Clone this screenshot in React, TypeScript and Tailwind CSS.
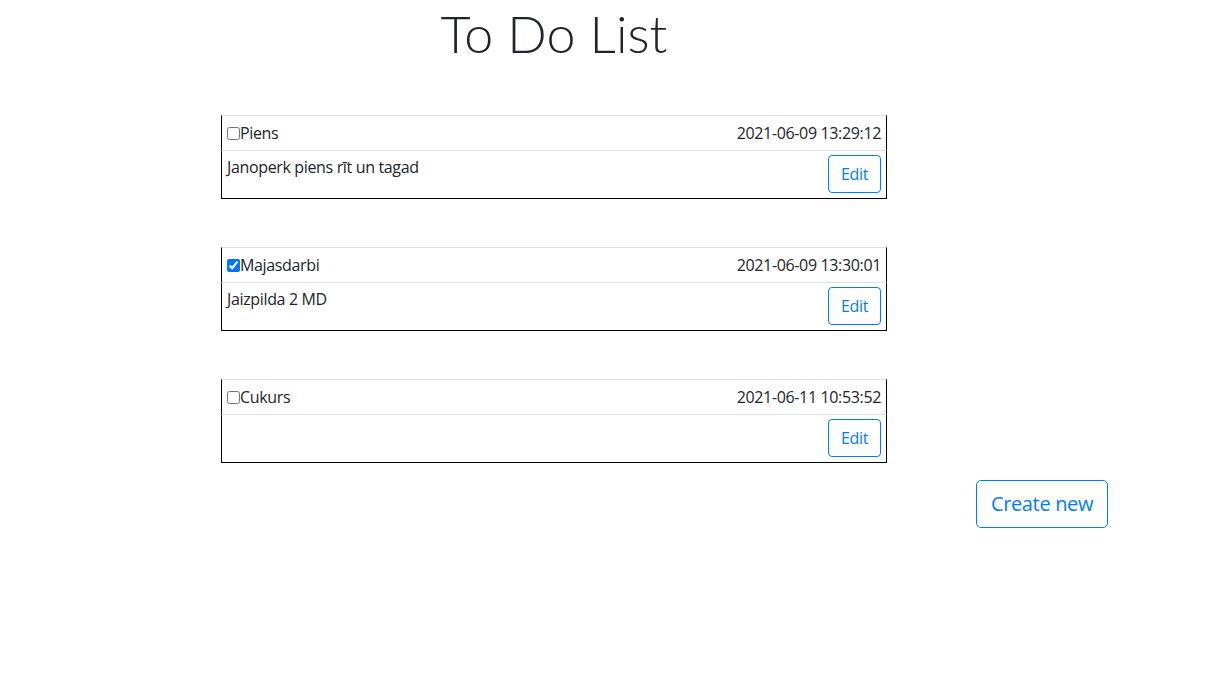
import React from "react";

type Item = { title: string; date: string; desc: string; done: boolean };

const items: Item[] = [
  { title: "Piens", date: "2021-06-09 13:29:12", desc: "Janoperk piens rīt un tagad", done: false },
  { title: "Majasdarbi", date: "2021-06-09 13:30:01", desc: "Jaizpilda 2 MD", done: true },
  { title: "Cukurs", date: "2021-06-11 10:53:52", desc: "", done: false },
];

function Card({ item }: { item: Item }) {
  return (
    <div className="mt-12 w-[666px]">
      <div className="flex items-center justify-between border-t border-t-[#dee2e6] border-x border-x-black px-[5px] h-[35px]">
        <label className="flex items-center">
          <input type="checkbox" defaultChecked={item.done} className="m-0 w-[13px] h-[13px]" />
          <span>{item.title}</span>
        </label>
        <span>{item.date}</span>
      </div>
      <div className="flex items-start justify-between border-t border-t-[#dee2e6] border-x border-x-black border-b border-b-black px-[5px] pt-[4px] pb-[5px]">
        <span className="leading-6">{item.desc}</span>
        <button className="h-[38px] w-[53px] rounded-[4px] border border-[#007bff] text-[#007bff] bg-white text-base leading-6">
          Edit
        </button>
      </div>
    </div>
  );
}

export default function App() {
  return (
    <div
      className="min-h-[697px] bg-white text-[#212529] text-base leading-6 tracking-[-0.35px]"
      style={{ fontFamily: '"Open Sans", "Noto Sans", "Liberation Sans", sans-serif' }}
    >
      <div className="ml-[221px] w-[666px]">
        <h1
          className="text-center text-[52px] leading-[67px] font-light m-0 tracking-normal"
          style={{ fontFamily: 'Lato, "Open Sans", sans-serif' }}
        >
          To Do List
        </h1>
        {items.map((it) => (
          <Card key={it.title} item={it} />
        ))}
      </div>
      <div className="flex justify-end pr-[115px] mt-[17px]">
        <button className="h-[48px] w-[132px] rounded-[5px] border border-[#007bff] text-[#007bff] bg-white text-[20px] leading-[30px]">
          Create new
        </button>
      </div>
    </div>
  );
}
